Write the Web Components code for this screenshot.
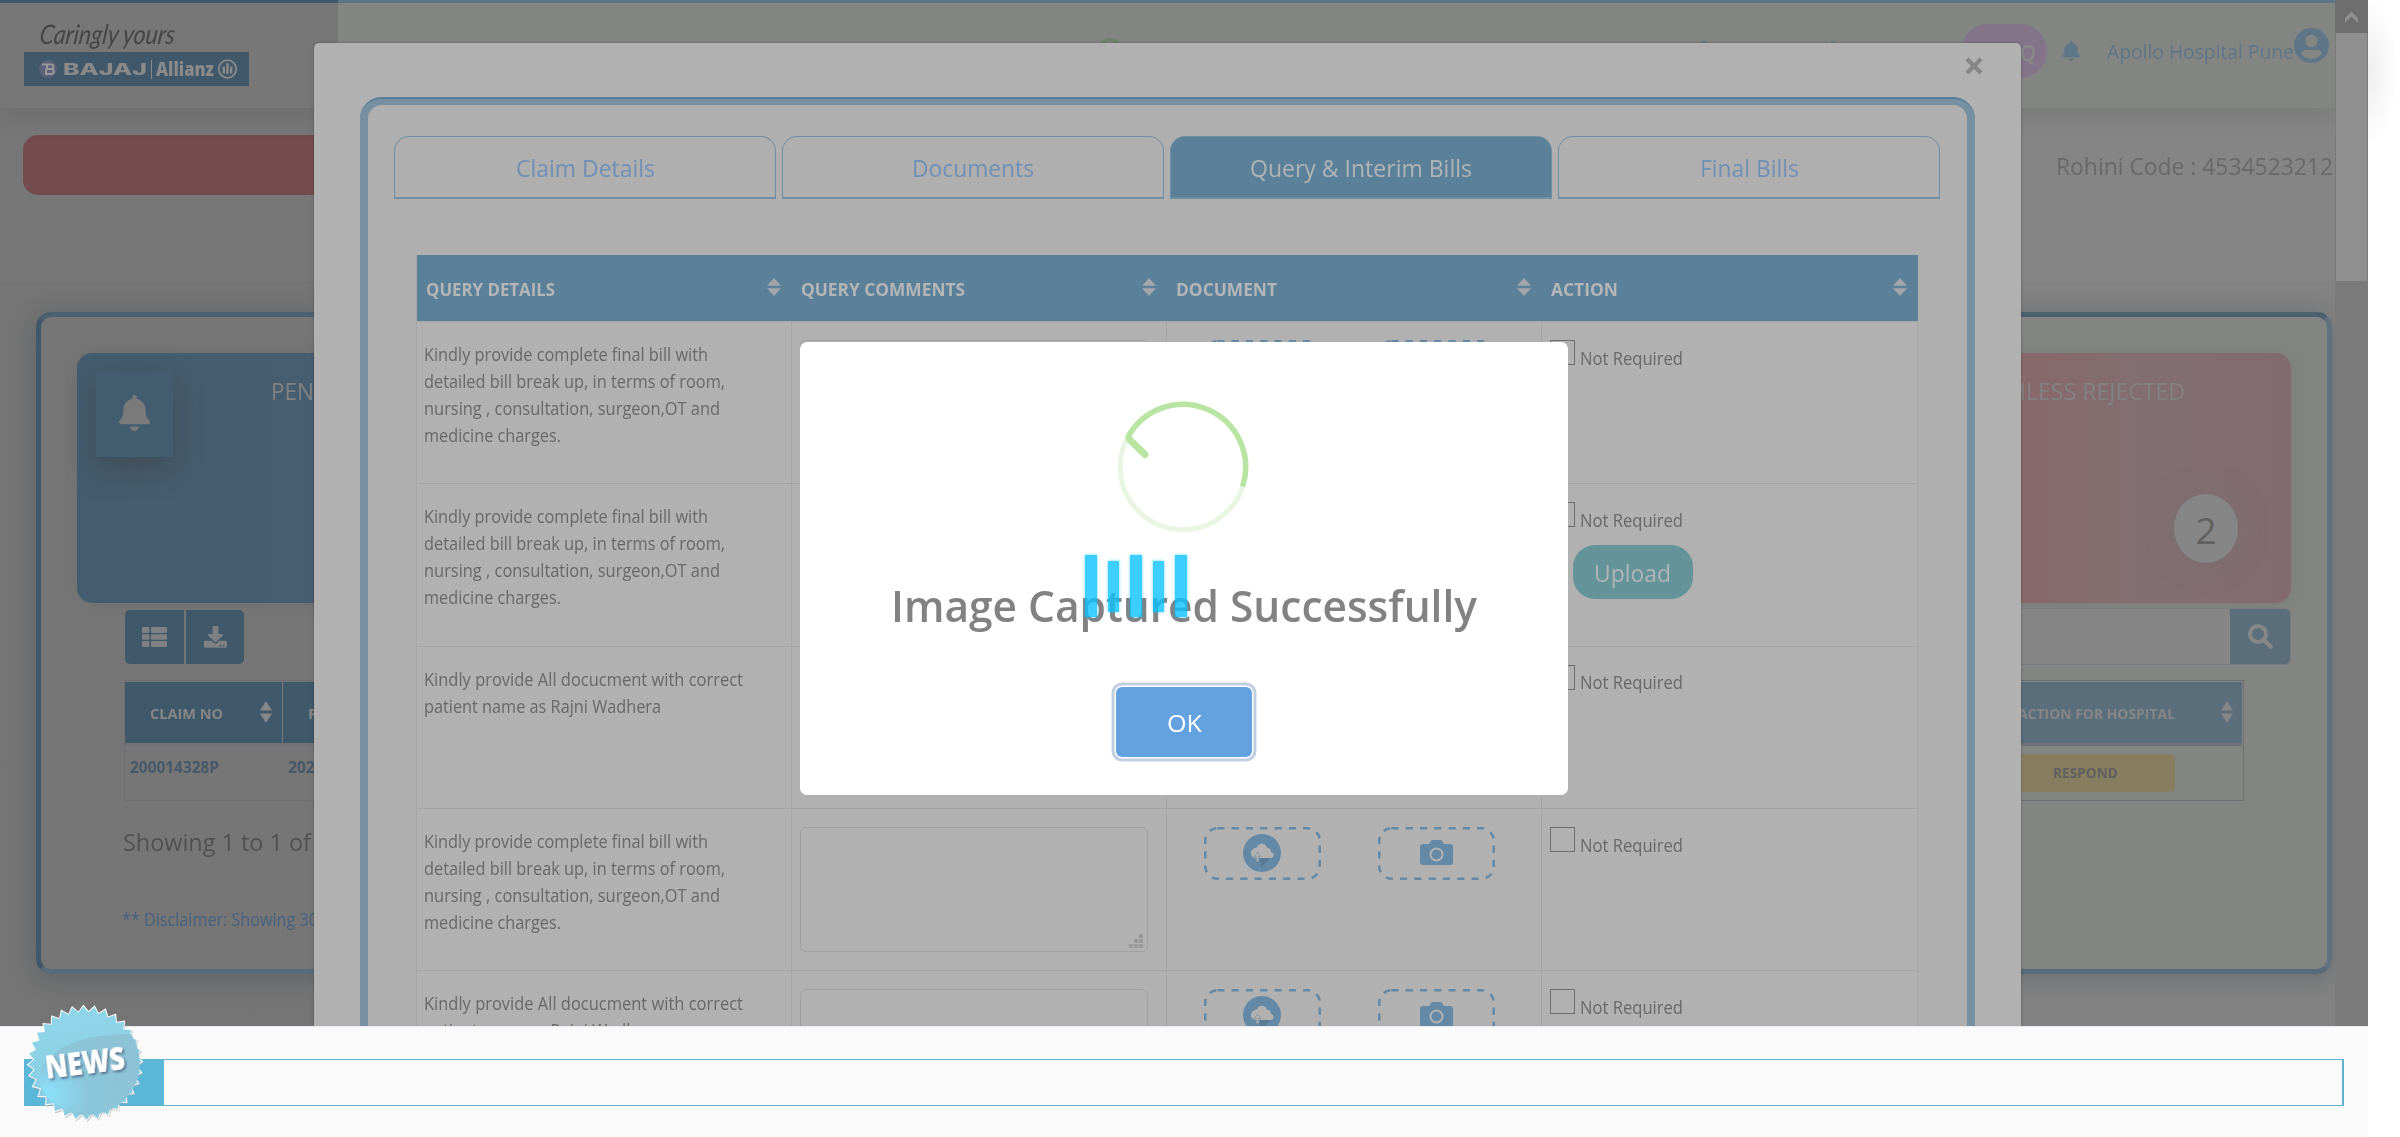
<!DOCTYPE html>
<html lang="en">
<head>
<meta charset="utf-8">
<title>Hospital claims</title>
<style>
html,body{margin:0;padding:0;background:#fff}
body{width:2400px;height:1137px;overflow:hidden;font-family:"Open Sans","Noto Sans",sans-serif;position:relative}
</style>
</head>
<body>
<claims-app></claims-app>
<script>
const fitted = new Set();

function define(name, css, html, setup) {
  const t = document.createElement('template');
  t.innerHTML = '<style>*{box-sizing:border-box}' + css + '</style>' + html;
  customElements.define(name, class extends HTMLElement {
    constructor() {
      super();
      this.attachShadow({ mode: 'open' }).append(t.content.cloneNode(true));
    }
    connectedCallback() { if (setup) setup(this, this.shadowRoot); }
  });
}

/* One line of text, set to the width given in "w" */
class FitText extends HTMLElement {
  constructor() {
    super();
    this.attachShadow({ mode: 'open' }).innerHTML =
      '<style>:host{display:block;white-space:nowrap;flex:none}span{display:inline-block;transform-origin:0 50%}</style><span><slot></slot></span>';
  }
  connectedCallback() { fitted.add(this); }
  fit() {
    const w = +this.getAttribute('w'), s = this.shadowRoot.querySelector('span');
    if (!w || !s.offsetWidth) return;
    s.style.transform = 'scaleX(' + (w / s.getBoundingClientRect().width) + ')';
    this.style.width = w + 'px';
  }
}
customElements.define('fit-text', FitText);

define('sort-icon', ':host{display:block;width:14px;height:18px;flex:none}svg{display:block;width:100%;height:100%}',
  '<svg viewBox="0 0 14 18" preserveAspectRatio="none"><path d="M7 0l7 7.800H0zM7 18l7-7.800H0z" fill="currentColor"/></svg>');

define('bell-icon', ':host{display:block;flex:none}svg{display:block;width:100%;height:100%}',
  '<svg viewBox="0 0 448 512" preserveAspectRatio="none"><path fill="currentColor" d="M224 512c35.300 0 64-28.600 64-64H160c0 35.400 28.600 64 64 64zm215-149c-19-21-55-52-55-155 0-78-54-140-128-155V32a32 32 0 1 0-64 0v21C118 68 64 130 64 208c0 103-36 134-55 155-6 6-9 14-9 21 0 16 13 32 32 32h384c19 0 32-16 32-32 0-7-3-15-9-21z"/></svg>');

define('brand-logo', `
:host{display:block;width:225px;margin:16px 0 0 24px}
.script{font:italic 400 27px/35px "Lato",cursive;color:#454545;padding-left:16px;height:36px;transform:skewX(-7deg)}
.bar{height:34px;background:#40586a;display:flex;align-items:center;color:#8a8a8a;padding-left:15px}
.b{font:800 16.500px/34px Inter,sans-serif;margin-left:6px}
.a{font:800 19px/34px "Open Sans",sans-serif}
i{width:1px;height:19px;background:#8a8a8a;margin:0 4px 0 4px}
`, `<div class="script"><fit-text w="139">Caringly yours</fit-text></div>
<div class="bar"><svg width="18" height="18" viewBox="0 0 18 18"><circle cx="9" cy="9" r="9" fill="#5b6178"/><path d="M3 4.500h9c3 0 3 4 .5 4.500 3 .5 3 5-.5 5H7V9m0 0h6M8 5v4" fill="none" stroke="#999" stroke-width="2"/></svg>
<fit-text class="b" w="84">BAJAJ</fit-text><i></i><fit-text class="a" w="58">Allianz</fit-text>
<svg style="margin-left:3px" width="21" height="20" viewBox="0 0 21 20"><circle cx="10.500" cy="10" r="8.800" fill="none" stroke="#8a8a8a" stroke-width="1.800"/><path d="M6.800 7.500v7M10.500 4.500v10.500M14.200 7.500v7" stroke="#8a8a8a" stroke-width="2.400"/><path d="M9 5h2" stroke="#8a8a8a"/></svg></div>`);

define('app-header', `
:host{display:flex;width:2336px;height:108px;background:linear-gradient(90deg,#777 338px,#838583 338px);box-shadow:0 12px 22px rgba(0,0,0,.07);position:relative;align-items:flex-start}
:host::before{content:"";position:absolute;left:0;top:0;width:2368px;height:3px;background:linear-gradient(90deg,#40586a 338px,#5b7588 338px)}
.ring{width:24px;height:24px;border:3px solid #6d8468;border-radius:50%;margin:38px 0 0 849px}
.dot{width:4px;height:3px;background:#6a7b87;margin-top:41px}
.pill{width:86px;height:54px;border-radius:27px;background:#83748a;margin:24px 0 0 126px;color:#898989;font:600 21px/58px "Open Sans";text-align:right;padding-right:11px}
bell-icon{width:18px;height:20px;margin:41px 0 0 15px;color:#5e7687}
.n{font-size:20px;line-height:28px;margin:38px 0 0 27px;color:#5e7687}
svg{display:block;margin:28px 0 0 0}
`, `<brand-logo></brand-logo><div class="ring"></div><div class="dot" style="margin-left:580px"></div><div class="dot" style="margin-left:125px"></div>
<div class="pill">Q</div><bell-icon></bell-icon><fit-text class="n" w="187">Apollo Hospital Pune</fit-text>
<svg width="35" height="35" viewBox="0 0 35 35"><circle cx="17.500" cy="17.500" r="17.500" fill="#5e7687"/><circle cx="17.500" cy="13" r="6.200" fill="#848684"/><path d="M7 25.500c2-5 6-3.500 10.500-3.500s8.500-1.500 10.500 3.500c-2.500 3.500-6 5.500-10.500 5.500S9.500 29 7 25.500z" fill="#848684"/></svg>`);

define('status-card', `
:host{display:flex;width:400px;height:250px;border-radius:15px;box-shadow:0 0 24px rgba(0,0,0,.06)}
`, `<slot></slot>`);

define('claims-panel', `
:host{display:block;width:2296px;height:662px;margin:117px 0 0 36px;border:5px solid #40586a;border-color:#4b6170 #60727f #566b7b #40586a;border-radius:15px;background:linear-gradient(90deg,#767676 600px,#838583 600px);box-shadow:0 4px 22px rgba(50,62,75,.32);padding:36px;position:relative}
.cards,.tools{display:flex;justify-content:space-between}
.pend{background:linear-gradient(90deg,#435d6f,#475d70 60%)}
.rej{background:linear-gradient(90deg,#87696b 38%,#826e71 62%,#826b6f)}
.sq{width:77px;height:85px;background:#435d70;margin:19px 0 0 19px;box-shadow:0 10px 28px rgba(60,60,60,.5);display:flex;justify-content:center}
.sq bell-icon{width:31px;height:36px;margin-top:23px;color:#7a7a7a}
.t{font-size:24px;line-height:32px;color:#828282;margin-top:22px}
.num{width:64px;height:69px;border-radius:50%;background:#868686;color:#616161;font-size:37px;line-height:72px;text-align:center;box-shadow:0 0 30px rgba(110,120,115,.35);margin:141px 53px 0 -11px}
.btns{display:flex;gap:2px;margin:7px 0 0 48px}
.btns div{width:59px;height:54px;background:#3f586a;display:flex;align-items:center;justify-content:center;border-radius:5px 0 0 5px}
.btns div+div{border-radius:0 5px 5px 0;width:58px}
.search{display:flex;margin-top:5px;border:1px solid #7c7c80;border-radius:5px;height:57px;width:400px}
.in{flex:1;background:#868686}
.go{width:60px;background:#5b6e7c;border-radius:0 5px 5px 0;display:flex;align-items:center;justify-content:center}
.table{margin:15px 0 0 47px;width:2120px;border:1px solid #707074;padding:1px 1px 0 0}
.hd{display:flex;height:61px;font-weight:700;font-size:15px;line-height:62px;color:#868686;background:linear-gradient(90deg,#3f586a 600px,#5b6e7c 600px)}
.c{display:flex;width:158px;border-right:1px solid #777}
.row{display:flex;height:57px;border-top:3px solid #717175;font-weight:700;font-size:15.500px;line-height:42px;color:#46596a}
.last{margin-left:auto;display:flex}
.respond{margin:8px 67px 0 auto;width:245px;height:38px;background:#877e60;border-radius:6px;color:#606060;font-size:14px;line-height:38px;padding-left:123px}
sort-icon{width:12px;height:22px;color:#878787;margin-top:19px}
.show{font-size:24px;line-height:32px;color:#515151;margin:25px 0 0 46px}
.dis{font-size:18.500px;line-height:28px;color:#46617f;margin:47px 0 0 45px}
`, `<div class="cards">
<status-card class="pend"><div class="sq"><bell-icon></bell-icon></div><fit-text class="t" style="margin-left:98px" w="43">PEN</fit-text></status-card>
<status-card class="rej"><fit-text class="t" style="margin-left:118px" w="176">HLESS REJECTED</fit-text><div class="num">2</div></status-card>
</div>
<div class="tools"><div class="btns"><div><svg width="25" height="20" viewBox="0 0 25 20" fill="#7f8083"><rect width="7.500" height="6" rx="1"/><rect x="9" width="16" height="6" rx="1"/><rect y="7.200" width="7.500" height="5.600" rx="1"/><rect x="9" y="7.200" width="16" height="5.600" rx="1"/><rect y="14" width="7.500" height="6" rx="1"/><rect x="9" y="14" width="16" height="6" rx="1"/></svg></div>
<div><svg width="23" height="22" viewBox="0 0 512 512" preserveAspectRatio="none" fill="#7f8083"><path d="M216 0h80c13 0 24 11 24 24v168h88c18 0 27 21 14 34L270 378c-8 7-20 7-28 0L90 226c-13-13-3-34 14-34h88V24c0-13 11-24 24-24zm296 376v112c0 13-11 24-24 24H24c-13 0-24-11-24-24V376c0-13 11-24 24-24h147l49 49c20 20 52 20 72 0l49-49h147c13 0 24 11 24 24zM388 464a20 20 0 1 0-40 0 20 20 0 0 0 40 0zm64 0a20 20 0 1 0-40 0 20 20 0 0 0 40 0z" transform="translate(0 -6)"/></svg></div></div>
<div class="search"><div class="in"></div><div class="go"><svg width="25" height="25" viewBox="0 0 25 25"><circle cx="10" cy="10" r="8" fill="none" stroke="#878787" stroke-width="4"/><path d="M16 16l6.500 6.500" stroke="#878787" stroke-width="4.500" stroke-linecap="round"/></svg></div></div></div>
<div class="table"><div class="hd"><div class="c"><fit-text style="margin-left:25px" w="73">CLAIM NO</fit-text><sort-icon style="margin-left:37px"></sort-icon></div><div style="padding-left:25px">R</div>
<div class="last"><fit-text w="157">ACTION FOR HOSPITAL</fit-text><sort-icon style="margin-left:46px;margin-right:9px"></sort-icon></div></div>
<div class="row"><div class="c"><fit-text style="margin-left:5px" w="89">200014328P</fit-text></div><div style="padding-left:5px">202</div>
<div class="respond"><fit-text w="65">RESPOND</fit-text></div></div></div>
<fit-text class="show" w="188">Showing 1 to 1 of</fit-text>
<fit-text class="dis" w="196">** Disclaimer: Showing 30</fit-text>`);

define('page-scrollbar', `
:host{display:block;width:33px;height:1026px;background:#7a7a7a;padding:0 1px;position:absolute;left:2335px;top:0}
.up{height:33px;background:#6e6e6e;margin:0 -1px;padding:11px 0 0 10px}
.th{height:248px;background:#8f8f8f}svg{display:block}
`, `<div class="up"><svg width="13" height="13" viewBox="0 0 13 13"><path d="M0 7l6.500-6.500L13 7v5L6.500 5.500 0 12z" fill="#8f8f8f"/></svg></div><div class="th"></div>`);

define('claims-page', `
:host{display:block;width:2368px;height:1026px;background:linear-gradient(rgba(0,0,0,0) 281px,rgba(0,0,0,.025) 281px),linear-gradient(90deg,#777 338px,#858585 338px)}
.ban{display:flex;margin-top:27px;height:60px;justify-content:space-between;padding:0 35px 0 23px}
.red{width:1500px;background:#744c4f;border-radius:15px}
.r{font-size:24px;line-height:32px;margin-top:15px;color:#69696c}
`, `<app-header></app-header><div class="ban"><div class="red"></div><fit-text class="r" w="277">Rohini Code : 4534523212</fit-text></div><claims-panel></claims-panel><page-scrollbar></page-scrollbar>`);

define('modal-tab', `
:host{display:flex;justify-content:center;width:382px;height:62.500px;border:1px solid #6f8fa5;border-bottom-width:2px;border-radius:15px 15px 0 0;color:#6f8fb5;font-size:23.500px;line-height:62px}
:host([active]){background:#5b8099;color:#b0b4b7}
`, `<slot></slot>`);

define('drop-box', `
:host{display:flex;width:117px;height:53px;border-radius:13px;align-items:center;justify-content:center;position:relative}
svg{display:block}.o{position:absolute;inset:0}
`, `<svg class="o" width="117" height="53"><rect x="1.300" y="1.300" width="114.400" height="50.400" rx="12" fill="none" stroke="#6389a6" stroke-width="2.500" stroke-dasharray="7.200 7.100"/></svg><slot></slot>`);

define('cloud-icon', ':host{display:block}svg{display:block}',
 `<svg width="38" height="38" viewBox="0 0 38 38"><circle cx="19" cy="19" r="19" fill="#6389a6"/><path d="M17 24l1 9 5-4 4-5z" fill="#587a93"/><path d="M12 24a5 5 0 0 1-1-9.500c1-1 2-1 3-1C15 8.500 23 8.500 24 14c3-.5 4 1.500 3.500 3.500C32 19 31 24 28 24z" fill="#b1b1b1"/><path d="M14.500 18l3.200 4.500h-2v5h-2.400v-5h-2z" fill="#b1b1b1" stroke="#7f9099" stroke-width=".8"/></svg>`);
define('camera-icon', ':host{display:block}svg{display:block}',
 `<svg width="33" height="26" viewBox="0 0 33 26"><path d="M3 4h6l2-3q.5-1 2-1h7q1.500 0 2 1l2 3h6q3 0 3 3v15q0 3-3 3H3q-3 0-3-3V7q0-3 3-3z" fill="#6389a6"/><circle cx="16.500" cy="14.500" r="6" fill="none" stroke="#b1b1b1" stroke-width="2"/></svg>`);

define('query-row', `
:host{display:grid;grid-template-columns:repeat(4,375.3px);height:162.350px;border-bottom:1px solid #a4a4a4;color:#686868;font-size:18px;line-height:27px}
.c{border-right:1px solid #a5a5a5}
.txt{padding:19px 0 0 7.500px}
.area{padding:17.500px 0 0 8.500px}
.ta{width:348px;height:125px;border:1px solid #a0a0a0;border-radius:6px;display:flex;align-items:flex-end;justify-content:flex-end;padding:0 3px 3px 0}
.doc{display:flex;gap:57.500px;padding:17.500px 0 0 36.500px}
.act{padding:18px 0 0 7.500px}
.lab{display:flex;height:25px;gap:5px}
.box{width:25px;height:25px;border:1.500px solid #6e6e6e;flex:none}
.lab fit-text{margin-top:4.500px}
`, `<div class="c txt"><slot></slot></div>
<div class="c area"><div class="ta"><svg width="15" height="14" viewBox="0 0 15 14" fill="#999"><path d="M10 0h4v4h-4zM5 5h4v4H5zM10 5h4v4h-4zM0 10h4v4H0zM5 10h4v4H5zM10 10h4v4h-4z"/></svg></div></div>
<div class="c doc"><drop-box><cloud-icon></cloud-icon></drop-box><drop-box><camera-icon></camera-icon></drop-box></div>
<div class="c act"><div class="lab"><div class="box"></div><fit-text w="103">Not Required</fit-text></div><slot name="action"></slot></div>`);

define('upload-button', `:host{display:block;width:120px;height:54px;border-radius:22px;background:#64939a;color:#b0b5b6;font-size:24px;line-height:55px;padding-left:21px;margin:18px 0 0 23px}`,
 `<fit-text w="77">Upload</fit-text>`);

const final4 = `<fit-text w="284">Kindly provide complete final bill with</fit-text><fit-text w="301">detailed bill break up, in terms of room,</fit-text><fit-text w="296">nursing , consultation, surgeon,OT and</fit-text><fit-text w="137">medicine charges.</fit-text>`;
const all2 = `<fit-text w="319">Kindly provide All docucment with correct</fit-text><fit-text w="237">patient name as Rajni Wadhera</fit-text>`;

define('claim-modal', `
:host{display:block;position:absolute;left:314px;top:43px;width:1707px;height:983px;background:#b1b1b1;border-radius:5px 5px 0 0;overflow:hidden;box-shadow:0 0 3px rgba(0,0,0,.3)}
.x{height:54px;display:flex;justify-content:flex-end;padding:14px 38px 0 0}
.p{margin-left:46px;width:1615px;height:1100px;border:8px solid #7690a2;border-radius:22px;background:#afafaf;padding:31px 0 0 26px;position:relative}
.p::before{content:"";position:absolute;inset:-8px;border-top:2px solid #5b7f99;border-radius:22px}
.tabs{display:flex;gap:6px}
.tb{margin:56.500px 0 0 21.500px;width:1502.500px;border-left:1px solid #a5a5a5;background:#b1b1b1}
.h{display:grid;grid-template-columns:repeat(4,375.3px);height:67px;background:#5b8099;border-bottom:1px solid #a5a5a5;color:#b3b5b6;font-weight:700;font-size:17.500px;line-height:68px}
.h div{display:flex;justify-content:space-between;padding:0 11px 0 9px}
.h sort-icon{margin-top:23px;color:#a3a5aa}
`, `<div class="x"><svg width="18" height="18" viewBox="0 0 18 18"><path d="M2 2l14 14M16 2L2 16" stroke="#868686" stroke-width="4.200"/></svg></div>
<div class="p"><div class="tabs"><modal-tab><fit-text w="139">Claim Details</fit-text></modal-tab><modal-tab><fit-text w="122">Documents</fit-text></modal-tab><modal-tab active><fit-text w="222">Query &amp; Interim Bills</fit-text></modal-tab><modal-tab><fit-text w="99">Final Bills</fit-text></modal-tab></div>
<div class="tb"><div class="h"><div><fit-text w="129">QUERY DETAILS</fit-text><sort-icon></sort-icon></div><div><fit-text w="164">QUERY COMMENTS</fit-text><sort-icon></sort-icon></div><div><fit-text w="101">DOCUMENT</fit-text><sort-icon></sort-icon></div><div><fit-text w="67">ACTION</fit-text><sort-icon></sort-icon></div></div>
<query-row>${final4}</query-row><query-row>${final4}<upload-button slot="action"></upload-button></query-row><query-row>${all2}</query-row><query-row>${final4}</query-row><query-row>${all2}</query-row></div></div>`);

define('success-dialog', `
:host{display:flex;flex-direction:column;align-items:center;position:absolute;left:800px;top:342px;width:768px;height:453px;border-radius:7px;background:#fff}
.ring{display:block;margin:59px 2px 0 0;flex:none}
.t{font-weight:600;font-size:44px;line-height:60px;color:#828282;margin-top:42px}
.ok{width:136px;height:70px;margin-top:52px;background:#64a2df;border-radius:6px;box-shadow:0 0 0 1.500px #fff,0 0 0 4.500px #c0cfe1;color:#fff;font-size:24px;line-height:72px;display:flex;justify-content:center}
.bars{position:absolute;left:285px;top:213px;display:flex;width:102px;height:62px;align-items:center;justify-content:space-between}
.bars i{width:12px;height:62px;background:rgba(11,194,255,.8);box-shadow:0 0 3px rgba(11,194,255,.6)}.bars i:nth-child(even){height:51px;width:11px}
`, `<svg class="ring" width="132" height="132" viewBox="-66 -66 132 132" fill="none"><circle r="62.700" stroke="#e9f6e2" stroke-width="5"/><path d="M-55.600 -29A62.700 62.700 0 0 1 59.600 19.400" stroke="#b9e5a2" stroke-width="5.500"/><path d="M-53.500 -27.500L-38 -12.500" stroke="#b9e5a2" stroke-width="7" stroke-linecap="round"/></svg>
<fit-text class="t" w="586">Image Captured Successfully</fit-text>
<div class="ok"><fit-text w="35">OK</fit-text></div>
<div class="bars"><i></i><i></i><i></i><i></i><i></i></div>`);

define('news-footer', `
:host{display:block;width:2368px;height:111px;background:#fafafa;border-top:1px solid #e9e9f2;padding:32px 24px 0;position:relative}
.bar{height:47px;border:1px solid #5fb4d2;border-right-width:2px;display:flex}
.tag{width:139px;background:#5bb7d8}
.badge{position:absolute;left:22px;top:-27px}
`, `<div class="bar"><div class="tag"></div></div>
<svg class="badge" width="126" height="126" viewBox="-63 -63 126 126"><defs><linearGradient id="g" x1="0" y1="0" x2=".2" y2="1"><stop offset="0" stop-color="#90d6ea"/><stop offset="1" stop-color="#8accdf"/></linearGradient><radialGradient id="b" cx=".1" cy=".75" r=".9"><stop offset="0" stop-color="#8be1fc"/><stop offset=".45" stop-color="#8bc6da"/><stop offset="1" stop-color="#8dc3d6"/></radialGradient><filter id="s" x="-20%" y="-20%" width="140%" height="140%"><feDropShadow dx="1.500" dy="2" stdDeviation="1" flood-color="#335" flood-opacity=".6"/></filter></defs>
<g class="star"></g><path d="M-48 14C-40 -10 -10 -30 46 -29A52 52 0 0 1 20 49 A52 52 0 0 1 -48 14z" fill="url(#b)"/>
<text x="0" y="11" text-anchor="middle" transform="rotate(-7)" font-family="Open Sans" font-weight="800" font-size="32" textLength="80" lengthAdjust="spacingAndGlyphs" fill="#fff" filter="url(#s)">NEWS</text></svg>`,
(el, root) => {
  const star = (R, r) => {
    const pts = [];
    for (let i = 0; i < 64; i++) {
      const a = (i - 0.3) * Math.PI / 32, d = i % 2 ? r : R;
      pts.push((Math.sin(a) * d).toFixed(1) + ',' + (-Math.cos(a) * d).toFixed(1));
    }
    return pts.join(' ');
  };
  root.querySelector('.star').innerHTML =
    `<polygon points="${star(58, 52)}" transform="translate(.8 1.300)" fill="#aaa" opacity=".6"/><polygon points="${star(58.5, 52)}" fill="#fff"/><polygon points="${star(56.8, 50.8)}" fill="url(#g)"/>`;
});

define('claims-app', `
:host{display:block;width:2400px;height:1137px;position:relative;overflow:hidden}
.top{display:flex;height:1026px;position:relative}
.edge{width:32px;background:radial-gradient(ellipse 30px 75px at 0 70px,#eee,#fff)}
claims-page{flex:none;overflow:hidden;position:relative}
`, `<div class="top"><claims-page></claims-page><div class="edge"></div><claim-modal></claim-modal><success-dialog></success-dialog></div><news-footer></news-footer>`);

fitted.forEach(t => t.fit());
</script>
</body>
</html>
